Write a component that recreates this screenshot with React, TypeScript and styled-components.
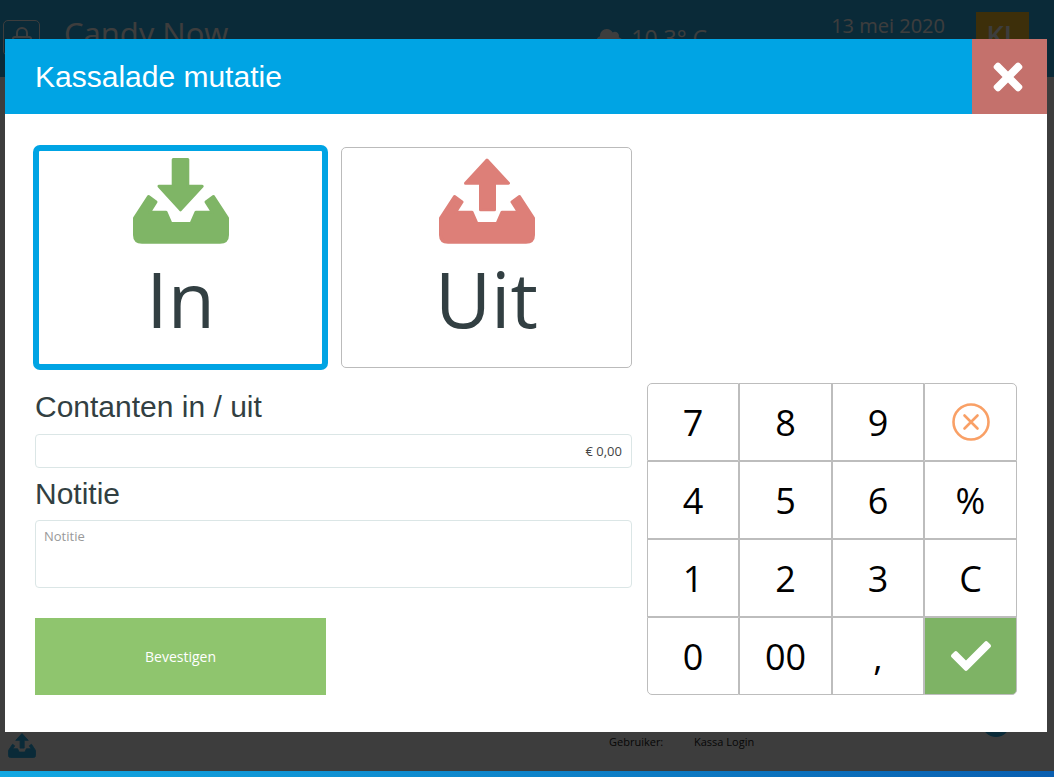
import React from "react";
import styled, { createGlobalStyle } from "styled-components";
import { FaCheck, FaTimes, FaCloud } from "react-icons/fa";
import { Lock } from "lucide-react";

const GlobalStyle = createGlobalStyle`
  html, body {
    margin: 0;
    height: 100%;
    background: #fff;
    overflow: hidden;
  }
  * {
    box-sizing: border-box;
  }
`;

const Page = styled.div`
  display: flex;
  flex-direction: column;
  height: 100vh;
  font-family: "Open Sans", sans-serif;
  color: #fff;
`;

const TopBar = styled.header`
  display: flex;
  align-items: flex-start;
  height: 77px;
  padding: 20px 25px 0 3px;
  background: #2aafe9;
`;

const LockBox = styled.div`
  display: flex;
  align-items: center;
  justify-content: center;
  width: 37px;
  height: 36px;
  border: 1px solid #fff;
  border-radius: 5px;
`;

const ShopName = styled.div`
  margin-left: 24px;
  margin-top: -7px;
  font-size: 31px;
  line-height: 41px;
`;

const Weather = styled.div`
  display: flex;
  align-items: center;
  gap: 8px;
  margin-left: 368px;
  margin-top: 5px;
  font-size: 23px;
  line-height: 27px;
`;

const DateText = styled.div`
  margin-left: auto;
  margin-top: -8px;
  font-size: 20px;
  line-height: 27px;
`;

const UserBadge = styled.div`
  width: 53px;
  height: 48px;
  margin-top: -8px;
  margin-left: 31px;
  padding-top: 5px;
  background: #fec42a;
  color: #fff;
  font-size: 27px;
  font-weight: 600;
  line-height: 36px;
  text-align: center;
`;

const Main = styled.main`
  flex: 1;
  display: flex;
  flex-direction: column;
  justify-content: flex-end;
`;

const InfoBar = styled.div`
  display: grid;
  grid-template-columns: 601px 1fr 28px;
  align-items: start;
  height: 68px;
  padding: 0 44px 0 8px;
  color: #222;
  font-size: 11px;
`;

const UploadSlot = styled.div`
  padding-top: 30px;
  color: #2aafe9;
`;

const UserLine = styled.div`
  display: grid;
  grid-template-columns: 85px 1fr;
  padding-top: 31px;
`;

const StatusDot = styled.div`
  width: 28px;
  height: 34px;
  border-radius: 0 0 14px 14px;
  background: #2aafe9;
`;

const BottomStrip = styled.div`
  height: 6px;
  background: linear-gradient(90deg, #12a8e2, #0a5fb0);
`;

const Overlay = styled.div`
  position: fixed;
  top: 0;
  left: 0;
  right: 0;
  bottom: 6px;
  background: rgba(0, 0, 0, 0.76);
  padding: 39px 7px 0 5px;
`;

const Modal = styled.div`
  height: 693px;
  background: #fff;
`;

const ModalHeader = styled.div`
  display: flex;
  align-items: center;
  justify-content: space-between;
  height: 75px;
  background: #00a4e4;
`;

const ModalTitle = styled.h1`
  margin: 0;
  padding-left: 30px;
  font-family: "Liberation Sans", Arial, sans-serif;
  font-size: 30px;
  font-weight: 400;
  color: #fff;
`;

const CloseButton = styled.button`
  display: flex;
  align-items: center;
  justify-content: center;
  width: 75px;
  height: 75px;
  padding: 0 3px 0 0;
  border: 0;
  background: #c4716c;
  color: #fff;
`;

const ModalBody = styled.div`
  display: grid;
  grid-template-columns: 291px 291px 370px;
  grid-template-rows: 221px 312px;
  column-gap: 15px;
  row-gap: 15px;
  padding: 33px 30px 0;
`;

const TypeButton = styled.button<{ $active?: boolean }>`
  display: flex;
  flex-direction: column;
  align-items: center;
  padding: ${(p) => (p.$active ? "7px 0 0" : "10px 0 0")};
  background: #fff;
  border: ${(p) => (p.$active ? "4px solid #00a4e4" : "1px solid #bbb")};
  border-radius: 5px;
  box-shadow: ${(p) => (p.$active ? "0 0 0 2px #00a4e4" : "none")};
  color: #323f42;
  font-family: "Open Sans", sans-serif;
  font-size: 77px;
  font-weight: 400;
  line-height: 105px;
`;

const TypeLabel = styled.span`
  margin-top: 2px;
`;

const FormColumn = styled.div`
  grid-column: 1 / span 2;
  display: flex;
  flex-direction: column;
  padding-top: 6px;
`;

const FieldLabel = styled.label`
  display: block;
  font-family: "Liberation Sans", Arial, sans-serif;
  font-size: 30px;
  line-height: 36px;
  color: #323f42;
`;

const AmountInput = styled.input`
  display: block;
  width: 100%;
  height: 34px;
  margin: 9px 0 8px;
  padding: 0 9px;
  border: 1px solid #dbe6e6;
  border-radius: 4px;
  color: #444;
  font-family: "Open Sans", sans-serif;
  font-size: 13px;
  text-align: right;
  outline: none;
`;

const NoteInput = styled.textarea`
  display: block;
  width: 100%;
  height: 68px;
  margin-top: 8px;
  padding: 6px 8px;
  border: 1px solid #dbe6e6;
  border-radius: 4px;
  font-family: "Open Sans", sans-serif;
  font-size: 13px;
  resize: none;
  outline: none;

  &::placeholder {
    color: #999;
    opacity: 1;
  }
`;

const ConfirmButton = styled.button`
  width: 291px;
  height: 77px;
  margin-top: 30px;
  border: 0;
  background: #8fc56e;
  color: #fff;
  font-family: "Open Sans", sans-serif;
  font-size: 14px;
  font-weight: 400;
`;

const Keypad = styled.div`
  display: grid;
  grid-template-columns: 92px 93px 92px 93px;
  grid-template-rows: repeat(4, 1fr);
`;

const Key = styled.button<{ $confirm?: boolean }>`
  display: flex;
  align-items: center;
  justify-content: center;
  padding: 0;
  border: 1px solid #bdbdbd;
  background: ${(p) => (p.$confirm ? "#7eb365" : "#fff")};
  color: ${(p) => (p.$confirm ? "#fff" : "#000")};
  font-family: "Open Sans", sans-serif;
  font-size: 36px;

  &:nth-child(1) {
    border-top-left-radius: 5px;
  }
  &:nth-child(4) {
    border-top-right-radius: 5px;
  }
  &:nth-child(13) {
    border-bottom-left-radius: 5px;
  }
  &:nth-child(16) {
    border-bottom-right-radius: 5px;
  }
`;

const TRAY =
  "M1.5 60 L15.5 38.5 L23 44 L16.5 54.2 L33 54.2 L38 65.5 L58 65.5 L63 54.2 L79.5 54.2 L73 44 L80.5 38.5 L94.5 60 L94.5 77 Q94.5 84.2 87 84.2 L9 84.2 Q1.5 84.2 1.5 77 Z";
const ARROW_DOWN =
  "M40.2 1.5 L54.8 1.5 L54.8 28.2 L69.2 28.2 L47.5 51.8 L26 28.2 L40.2 28.2 Z";
const ARROW_UP =
  "M48 2.1 L69.5 25.2 L55.5 25.2 L55.5 51.8 L41.5 51.8 L41.5 25.2 L26.5 25.2 Z";

function TrayIcon({ direction, color, width }: { direction: "in" | "out"; color: string; width: number }) {
  return (
    <svg width={width} height={(width * 86) / 96} viewBox="0 0 96 86" style={{ display: "block" }}>
      <g fill={color} stroke={color} strokeWidth="3" strokeLinejoin="round">
        <path d={TRAY} />
        <path d={direction === "in" ? ARROW_DOWN : ARROW_UP} />
      </g>
    </svg>
  );
}

function ClearIcon() {
  return (
    <svg width="38" height="38" viewBox="0 0 38 38" fill="none" stroke="#f9a066" strokeWidth="2.6" strokeLinecap="round">
      <circle cx="19" cy="19" r="17.5" />
      <path d="M12.5 12.5 L25.5 25.5 M25.5 12.5 L12.5 25.5" />
    </svg>
  );
}

const keys: React.ReactNode[] = ["7", "8", "9", <ClearIcon key="clear" />, "4", "5", "6", "%", "1", "2", "3", "C", "0", "00", ","];

export default function App() {
  return (
    <>
      <GlobalStyle />
      <Page>
        <TopBar>
          <LockBox>
            <Lock size={24} />
          </LockBox>
          <ShopName>Candy Now</ShopName>
          <Weather>
            <FaCloud size={27} />
            10,3° C
          </Weather>
          <DateText>13 mei 2020</DateText>
          <UserBadge>KL</UserBadge>
        </TopBar>
        <Main>
          <InfoBar>
            <UploadSlot>
              <TrayIcon direction="out" color="#2aafe9" width={28} />
            </UploadSlot>
            <UserLine>
              <span>Gebruiker:</span>
              <span>Kassa Login</span>
            </UserLine>
            <StatusDot />
          </InfoBar>
        </Main>
        <BottomStrip />
      </Page>
      <Overlay>
        <Modal>
          <ModalHeader>
            <ModalTitle>Kassalade mutatie</ModalTitle>
            <CloseButton aria-label="Sluiten">
              <FaTimes size={42} />
            </CloseButton>
          </ModalHeader>
          <ModalBody>
            <TypeButton $active>
              <TrayIcon direction="in" color="#7fb566" width={96} />
              <TypeLabel>In</TypeLabel>
            </TypeButton>
            <TypeButton>
              <TrayIcon direction="out" color="#dd7f78" width={96} />
              <TypeLabel>Uit</TypeLabel>
            </TypeButton>
            <div />
            <FormColumn>
              <FieldLabel>Contanten in / uit</FieldLabel>
              <AmountInput readOnly value="€ 0,00" />
              <FieldLabel>Notitie</FieldLabel>
              <NoteInput placeholder="Notitie" />
              <ConfirmButton>Bevestigen</ConfirmButton>
            </FormColumn>
            <Keypad>
              {keys.map((k, i) => (
                <Key key={i}>{k}</Key>
              ))}
              <Key $confirm aria-label="Bevestigen">
                <FaCheck size={40} />
              </Key>
            </Keypad>
          </ModalBody>
        </Modal>
      </Overlay>
    </>
  );
}
